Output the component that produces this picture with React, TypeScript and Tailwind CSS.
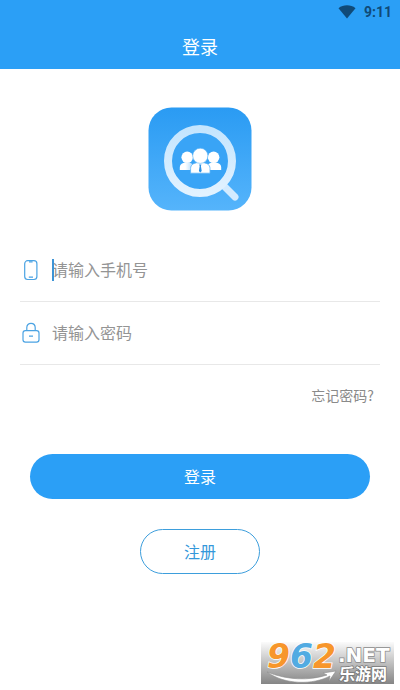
import type { ReactNode } from "react";

function WifiIcon() {
  return (
    <svg width="18" height="14" viewBox="0 0 18 14" aria-hidden="true">
      <path d="M0.5 3.2C5.2-0.6 12.8-0.6 17.5 3.2L9 13.6Z" fill="#104a78" />
    </svg>
  );
}

function Logo() {
  return (
    <svg width="104" height="104" viewBox="0 0 104 104" role="img" aria-label="logo">
      <defs>
        <linearGradient id="tile" x1="0" y1="0" x2="0" y2="1">
          <stop offset="0" stopColor="#2a9bf3" />
          <stop offset="1" stopColor="#55b4fb" />
        </linearGradient>
        <linearGradient id="lens" x1="0" y1="0" x2="0" y2="1">
          <stop offset="0" stopColor="#c4e5fe" />
          <stop offset="1" stopColor="#e2f2ff" />
        </linearGradient>
        <linearGradient id="side" x1="0" y1="0" x2="1" y2="0">
          <stop offset="0.4" stopColor="#ffffff" />
          <stop offset="1" stopColor="#a9d7fb" />
        </linearGradient>
      </defs>
      <rect x="0.5" y="0.5" width="103" height="103" rx="23" fill="url(#tile)" />
      <path d="M76 79L87 90" stroke="#d3ebff" strokeWidth="7" strokeLinecap="round" />
      <circle cx="52" cy="54" r="32" fill="#39a4f6" stroke="url(#lens)" strokeWidth="8" />
      <circle cx="39.2" cy="50.3" r="5.8" fill="#fff" />
      <path d="M31.8 63V60.5C31.8 57 34.5 55.4 39 55.4S45.5 57 45.5 60V63Z" fill="url(#side)" />
      <circle cx="65.6" cy="50.3" r="5.8" fill="#fff" />
      <path d="M73.2 63V60.5C73.2 57 70.5 55.4 66 55.4S59.5 57 59.5 60V63Z" fill="#fff" />
      <path d="M42.6 66.2V61.5C42.6 57.5 46 55.4 52.3 55.4S62 57.5 62 61.5V66.2Z" fill="#fff" stroke="#5ab4f7" strokeWidth="0.8" />
      <circle cx="52.3" cy="48.8" r="7.6" fill="#fff" stroke="#5ab4f7" strokeWidth="0.6" />
      <path d="M51.1 57.5H53.5L52.9 59L53.7 64L52.3 65.4L50.9 64L51.7 59Z" fill="#2a91e4" />
    </svg>
  );
}

function PhoneIcon() {
  return (
    <svg width="22" height="22" viewBox="0 0 22 22" fill="none" stroke="#4ba3e3" strokeWidth="1.2" aria-hidden="true">
      <rect x="4.7" y="1.7" width="12.2" height="18.8" rx="3" />
      <path d="M9 2.8H12.6M8.8 18.2H13" />
    </svg>
  );
}

function LockIcon() {
  return (
    <svg width="22" height="22" viewBox="0 0 22 22" fill="none" stroke="#4ba3e3" strokeWidth="1.2" aria-hidden="true">
      <rect x="3" y="8.6" width="16" height="11.6" rx="2.4" />
      <path d="M6.8 8.6V5.6C6.8 3 8.5 1.4 11 1.4S15.2 3 15.2 5.6V8.6M9 14.2H13" />
    </svg>
  );
}

type FieldProps = {
  id: string;
  label: string;
  type: string;
  icon: ReactNode;
  caret?: boolean;
};

function Field({ id, label, type, icon, caret }: FieldProps) {
  return (
    <div className="flex h-[63px] items-center gap-[10px] border-b border-[#e8e8e8]">
      <label htmlFor={id} aria-label={label}>
        {icon}
      </label>
      <div className="relative flex-1">
        {caret && <span className="absolute inset-y-0 left-0 w-[2px] bg-[#3d94d6]" />}
        <input
          id={id}
          type={type}
          placeholder={label}
          className="block h-[22px] w-full bg-transparent pb-[2px] text-base leading-5 outline-none placeholder:text-[#949494]"
        />
      </div>
    </div>
  );
}

function SiteBadge() {
  return (
    <svg
      className="absolute right-[6px] bottom-[6px] overflow-visible"
      width="133"
      height="42"
      viewBox="0 0 133 42"
      role="img"
      aria-label="962.NET 乐游网"
    >
      <defs>
        <linearGradient id="plate" x1="0" y1="0" x2="0" y2="1">
          <stop offset="0" stopColor="#fbfbfb" />
          <stop offset="1" stopColor="#858585" />
        </linearGradient>
      </defs>
      <rect width="133" height="42" fill="url(#plate)" />
      <path d="M6 30C24 43 52 43 69 34L68 39L75 29L62 31L66 33C48 39 26 38 6 30Z" fill="#fff" stroke="#8c8c8c" strokeWidth="0.6" />
      <g fontFamily="DejaVu Sans, sans-serif" fontWeight="bold" paintOrder="stroke">
        <text x="6" y="26" fontSize="33" fontStyle="italic" stroke="#fff" strokeWidth="1.5">
          <tspan fill="#f7962b">9</tspan>
          <tspan fill="#52abe2">6</tspan>
          <tspan fill="#f7962b">2</tspan>
        </text>
        <text x="77" y="20" fontSize="20" fill="#fff" stroke="#8a8a8a" strokeWidth="1.5">
          .NET
        </text>
      </g>
      <text
        x="78"
        y="38"
        fontSize="16"
        fontWeight="bold"
        fontFamily="Noto Sans CJK SC, sans-serif"
        fill="#fff"
        stroke="#777"
        strokeWidth="1.5"
        paintOrder="stroke"
      >
        乐游网
      </text>
    </svg>
  );
}

export default function App() {
  return (
    <div className="relative flex min-h-screen flex-col bg-white font-['Noto_Sans_CJK_SC',sans-serif]">
      <header className="bg-[#2b9ff6]">
        <div className="flex h-6 items-center justify-end gap-2 px-2 font-[Roboto,sans-serif] text-sm font-bold text-[#104a78]">
          <WifiIcon />
          <span>9:11</span>
        </div>
        <h1 className="flex h-[45px] items-center justify-center pb-[2px] text-lg text-white">登录</h1>
      </header>

      <main className="px-5">
        <div className="flex justify-center pt-[38px] pb-7">
          <Logo />
        </div>
        <form>
          <Field id="phone" label="请输入手机号" type="tel" icon={<PhoneIcon />} caret />
          <Field id="password" label="请输入密码" type="password" icon={<LockIcon />} />
          <div className="flex h-[60px] items-center justify-end pr-[6px]">
            <a href="#forgot" className="text-sm text-[#8a8a8a]">
              忘记密码?
            </a>
          </div>
          <div className="flex flex-col items-center gap-[30px] px-[10px] pt-[29px]">
            <button type="submit" className="h-[45px] w-full rounded-full bg-[#2b9ff6] pb-[2px] text-base text-white">
              登录
            </button>
            <button
              type="button"
              className="h-[45px] w-[120px] rounded-full border border-[#3d9edc] pb-[2px] text-base text-[#3598da]"
            >
              注册
            </button>
          </div>
        </form>
      </main>
      <SiteBadge />
    </div>
  );
}
